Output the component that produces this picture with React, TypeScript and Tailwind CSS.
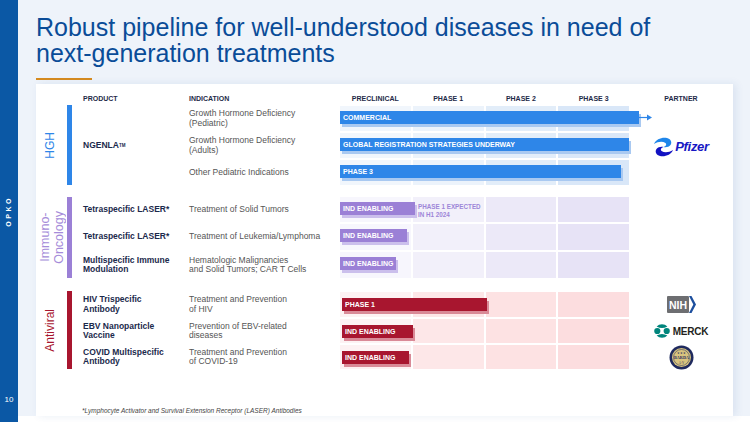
import type { ReactNode } from "react";

type Bar = { label: string; cls: string; extra?: ReactNode };

type Row = {
  product?: ReactNode;
  indication: ReactNode;
  bar: Bar;
  note?: ReactNode;
  partner?: ReactNode;
};

function StageRow({ tints, bar, top, note }: { tints: string[]; bar: Bar; top: string; note?: ReactNode }) {
  return (
    <div className="relative h-full">
      <div className="grid h-full grid-cols-4 gap-x-[2px]">
        {tints.map((t, i) => (
          <div key={i} className={t} />
        ))}
      </div>
      <div
        className={`absolute h-[13px] whitespace-nowrap pl-[3px] text-[7px] font-bold leading-[13px] text-white ${top} ${bar.cls}`}
      >
        {bar.label}
        {bar.extra}
      </div>
      {note}
    </div>
  );
}

function Label({ text, textCls, barCls }: { text: ReactNode; textCls: string; barCls: string }) {
  return (
    <div className="flex w-[47px] shrink-0">
      <div className={`flex flex-1 items-center justify-end ${textCls}`}>
        <div className="rotate-180 text-center [writing-mode:vertical-rl]">{text}</div>
      </div>
      <div className={`w-[5px] ${barCls}`} />
      <div className="w-[11px]" />
    </div>
  );
}

function Cell({ children, cls }: { children?: ReactNode; cls: string }) {
  return <div className={`flex items-center ${cls}`}>{children}</div>;
}

const product = "text-[8.5px] font-bold leading-[9.5px] text-[#1b2a4c]";
const indication = "text-[8.5px] leading-[9.5px] text-[#555]";

function PfizerLogo() {
  return (
    <div className="flex items-center">
      <svg width="21" height="22" viewBox="0 0 21 22">
        <path
          d="M1 8 C3 3 9 1 14 2 C17.5 3 19.5 6 17.5 9 C16 11 13 11.5 10.5 11 C13 10 14 8.5 12.5 7 C9.5 5 5 5.5 1 8 Z"
          fill="#1f86ea"
        />
        <path
          d="M20 14 C18 19 12 21 7 20 C3.5 19 1.5 16 3.5 13 C5 11 8 10.5 10.5 11 C8 12 7 13.5 8.5 15 C11.5 17 16 16.5 20 14 Z"
          fill="#1212c2"
        />
      </svg>
      <span className="ml-[1px] text-[13px] font-bold italic tracking-[-0.3px] text-[#1717c4]">Pfizer</span>
    </div>
  );
}

function NihLogo() {
  return (
    <svg width="29" height="17" viewBox="0 0 29 17">
      <rect x="0" y="0" width="22" height="17" rx="1" fill="#6d6e71" />
      <text
        x="11"
        y="12.8"
        textAnchor="middle"
        fontSize="10.5"
        fontWeight="700"
        fill="#ffffff"
        fontFamily="Liberation Sans, Arial, sans-serif"
      >
        NIH
      </text>
      <path d="M22 0 L24.5 0 L29 8.5 L24.5 17 L22 17 L26.3 8.5 Z" fill="#1d4f9e" />
    </svg>
  );
}

function MerckLogo() {
  return (
    <div className="flex items-center gap-[3px]">
      <svg width="16" height="16" viewBox="0 0 16 16">
        <path d="M2.6 3.6 A7.6 7.6 0 0 1 13.4 3.6 Q8 6.6 2.6 3.6 Z" fill="#00857c" />
        <path d="M2.6 12.4 A7.6 7.6 0 0 0 13.4 12.4 Q8 9.4 2.6 12.4 Z" fill="#00857c" />
        <circle cx="3.3" cy="8" r="3.1" fill="#00857c" />
        <circle cx="12.7" cy="8" r="3.1" fill="#00857c" />
      </svg>
      <span className="text-[10px] font-bold tracking-[-0.2px] text-[#231f20]">MERCK</span>
    </div>
  );
}

function BardaSeal() {
  return (
    <svg width="25" height="25" viewBox="0 0 25 25">
      <circle cx="12.5" cy="12.5" r="12" fill="#1f2a5e" />
      <circle cx="12.5" cy="12.5" r="9.5" fill="#d9c47e" />
      <circle cx="12.5" cy="12.5" r="8" fill="none" stroke="#1f2a5e" strokeWidth="0.5" />
      <text x="12.5" y="9" textAnchor="middle" fontSize="3" fill="#1f2a5e" fontFamily="Liberation Serif, serif">
        ★★★
      </text>
      <text
        x="12.5"
        y="14"
        textAnchor="middle"
        fontSize="4.2"
        fontWeight="700"
        fill="#1f2a5e"
        fontFamily="Liberation Serif, serif"
      >
        BARDA
      </text>
      <text x="12.5" y="18.5" textAnchor="middle" fontSize="3" fill="#1f2a5e" fontFamily="Liberation Serif, serif">
        A·V
      </text>
    </svg>
  );
}

const hghTints = ["bg-[#f1f6fc]", "bg-[#ecf3fb]", "bg-[#e2edf9]", "bg-[#d9e7f8]"];
const ioTints = ["bg-[#f7f6fd]", "bg-[#f2f0fa]", "bg-[#ece9f8]", "bg-[#e7e3f6]"];
const avTints = ["bg-[#fdf2f3]", "bg-[#fde7e8]", "bg-[#fde2e3]", "bg-[#fcdddf]"];

const blue = "bg-[#2e86e8] shadow-[2px_3px_0_#a9c9f1]";
const purple = "bg-[#9b80d6] shadow-[2px_3px_0_#cbbfec]";
const red = "bg-[#a8162f] shadow-[2px_3px_0_#d98a97]";

const arrow = (
  <svg className="absolute left-full top-[3px]" width="13" height="7" viewBox="0 0 13 7">
    <line x1="0" y1="3.5" x2="9" y2="3.5" stroke="#2e86e8" strokeWidth="1.2" />
    <path d="M8 0.5 L13 3.5 L8 6.5 Z" fill="#2e86e8" />
  </svg>
);

const hghRows: Row[] = [
  {
    indication: (
      <>
        Growth Hormone Deficiency
        <br />
        (Pediatric)
      </>
    ),
    bar: { label: "COMMERCIAL", cls: `left-0 w-[299px] ${blue}`, extra: arrow },
  },
  {
    indication: (
      <>
        Growth Hormone Deficiency
        <br />
        (Adults)
      </>
    ),
    bar: { label: "GLOBAL REGISTRATION STRATEGIES UNDERWAY", cls: `left-0 w-[289px] ${blue}` },
  },
  {
    indication: "Other Pediatric Indications",
    bar: { label: "PHASE 3", cls: `left-0 w-[281px] ${blue}` },
  },
];

const ioRows: Row[] = [
  {
    product: "Tetraspecific LASER*",
    indication: "Treatment of Solid Tumors",
    bar: { label: "IND ENABLING", cls: `left-0 w-[75px] ${purple}` },
    note: (
      <div className="absolute left-[78px] top-[6px] text-[6.3px] font-bold leading-[7.5px] text-[#9d86d8]">
        PHASE 1 EXPECTED
        <br />
        IN H1 2024
      </div>
    ),
  },
  {
    product: "Tetraspecific LASER*",
    indication: "Treatment of Leukemia/Lymphoma",
    bar: { label: "IND ENABLING", cls: `left-0 w-[67px] ${purple}` },
  },
  {
    product: (
      <>
        Multispecific Immune
        <br />
        Modulation
      </>
    ),
    indication: (
      <>
        Hematologic Malignancies
        <br />
        and Solid Tumors; CAR T Cells
      </>
    ),
    bar: { label: "IND ENABLING", cls: `left-0 w-[56px] ${purple}` },
  },
];

const avRows: Row[] = [
  {
    product: (
      <>
        HIV Trispecific
        <br />
        Antibody
      </>
    ),
    indication: (
      <>
        Treatment and Prevention
        <br />
        of HIV
      </>
    ),
    bar: { label: "PHASE 1", cls: `left-[2px] w-[145px] ${red}` },
    partner: <NihLogo />,
  },
  {
    product: (
      <>
        EBV Nanoparticle
        <br />
        Vaccine
      </>
    ),
    indication: (
      <>
        Prevention of EBV-related
        <br />
        diseases
      </>
    ),
    bar: { label: "IND ENABLING", cls: `left-[2px] w-[71px] ${red}` },
    partner: <MerckLogo />,
  },
  {
    product: (
      <>
        COVID Multispecific
        <br />
        Antibody
      </>
    ),
    indication: (
      <>
        Treatment and Prevention
        <br />
        of COVID-19
      </>
    ),
    bar: { label: "IND ENABLING", cls: `left-[2px] w-[67px] ${red}` },
    partner: <BardaSeal />,
  },
];

export default function App() {
  return (
    <div className="flex h-[422px] w-[750px] overflow-hidden bg-white font-['Liberation_Sans',Arial,sans-serif]">
      {/* left brand bar */}
      <aside className="flex w-[18px] shrink-0 flex-col items-center bg-[#0b58a5] text-white">
        <div className="mt-[196px] rotate-180 text-[7px] font-bold tracking-[2.5px] [writing-mode:vertical-rl]">
          OPKO
        </div>
        <div className="mb-[17px] mt-auto text-[8px] leading-[10px]">10</div>
      </aside>

      <main className="flex h-[416px] flex-1 flex-col bg-[#eef3fa] pl-[18px] pr-[17px]">
        <h1 className="pt-[14px] text-[25px] leading-[26px] text-[#0a4c98]">
          Robust pipeline for well-understood diseases in need of
          <br />
          next-generation treatments
        </h1>
        <div className="mt-[12px] h-[2px] w-[56px] bg-[#d68b1f]" />

        <section className="mt-[4px] flex flex-1 flex-col bg-white pt-[9px] shadow-[3px_0_8px_rgba(40,90,160,0.10)]">
          {/* header */}
          <div className="flex h-[12px] items-center text-[7px] font-bold text-[#1e2a48]">
            <div className="w-[47px]" />
            <div className="w-[106px]">PRODUCT</div>
            <div className="w-[151px]">INDICATION</div>
            <div className="grid w-[289px] grid-cols-4 gap-x-[2px] text-center">
              <div>PRECLINICAL</div>
              <div>PHASE 1</div>
              <div>PHASE 2</div>
              <div>PHASE 3</div>
            </div>
            <div className="w-[104px] text-center">PARTNER</div>
          </div>

          {/* HGH */}
          <div className="flex">
            <Label
              text="HGH"
              textCls="pr-[8px] text-[12px] text-[#2e86e8]"
              barCls="bg-[#2e86e8]"
            />
            <div className="grid grid-cols-[106px_151px_289px_104px] grid-rows-[25px_25px_25px] gap-y-[2px] pt-[1px]">
              <Cell cls={`col-start-1 row-span-3 row-start-1 ${product}`}>
                NGENLA<span className="align-top text-[4.5px]">TM</span>
              </Cell>
              {hghRows.map((r, i) => (
                <div key={i} className="contents">
                  <Cell cls={`col-start-2 ${indication}`}>
                    <div>{r.indication}</div>
                  </Cell>
                  <div className="col-start-3">
                    <StageRow tints={hghTints} bar={r.bar} top="top-[5px]" />
                  </div>
                </div>
              ))}
              <div className="col-start-4 row-span-3 row-start-1 flex items-center justify-center pt-[2px]">
                <PfizerLogo />
              </div>
            </div>
          </div>

          {/* Immuno-Oncology */}
          <div className="mt-[12px] flex">
            <Label
              text={
                <>
                  Immuno-
                  <br />
                  Oncology
                </>
              }
              textCls="pr-[1px] text-[12.5px] leading-[14px] text-[#a58bd9]"
              barCls="bg-[#9b80d6]"
            />
            <div className="grid grid-cols-[106px_151px_289px_104px] grid-rows-[25px_26px_26px] gap-y-[2px]">
              {ioRows.map((r, i) => (
                <div key={i} className="contents">
                  <Cell cls={product}>
                    <div>{r.product}</div>
                  </Cell>
                  <Cell cls={indication}>
                    <div>{r.indication}</div>
                  </Cell>
                  <StageRow tints={ioTints} bar={r.bar} top="top-[5px]" note={r.note} />
                  <div />
                </div>
              ))}
            </div>
          </div>

          {/* Antiviral */}
          <div className="mt-[13px] flex">
            <Label text="Antiviral" textCls="pr-[8px] text-[12px] text-[#a8162f]" barCls="bg-[#a8162f]" />
            <div className="grid grid-cols-[106px_151px_289px_104px] grid-rows-[25px_24px_24px] gap-y-[2px] pt-[1px]">
              {avRows.map((r, i) => (
                <div key={i} className="contents">
                  <Cell cls={product}>
                    <div>{r.product}</div>
                  </Cell>
                  <Cell cls={indication}>
                    <div>{r.indication}</div>
                  </Cell>
                  <StageRow tints={avTints} bar={r.bar} top="top-[6px]" />
                  <div className="flex items-center justify-center">{r.partner}</div>
                </div>
              ))}
            </div>
          </div>

          <p className="mt-auto pb-[1px] pl-[46px] text-[6.5px] italic leading-[8px] text-[#444]">
            *Lymphocyte Activator and Survival Extension Receptor (LASER) Antibodies
          </p>
        </section>
      </main>
    </div>
  );
}
